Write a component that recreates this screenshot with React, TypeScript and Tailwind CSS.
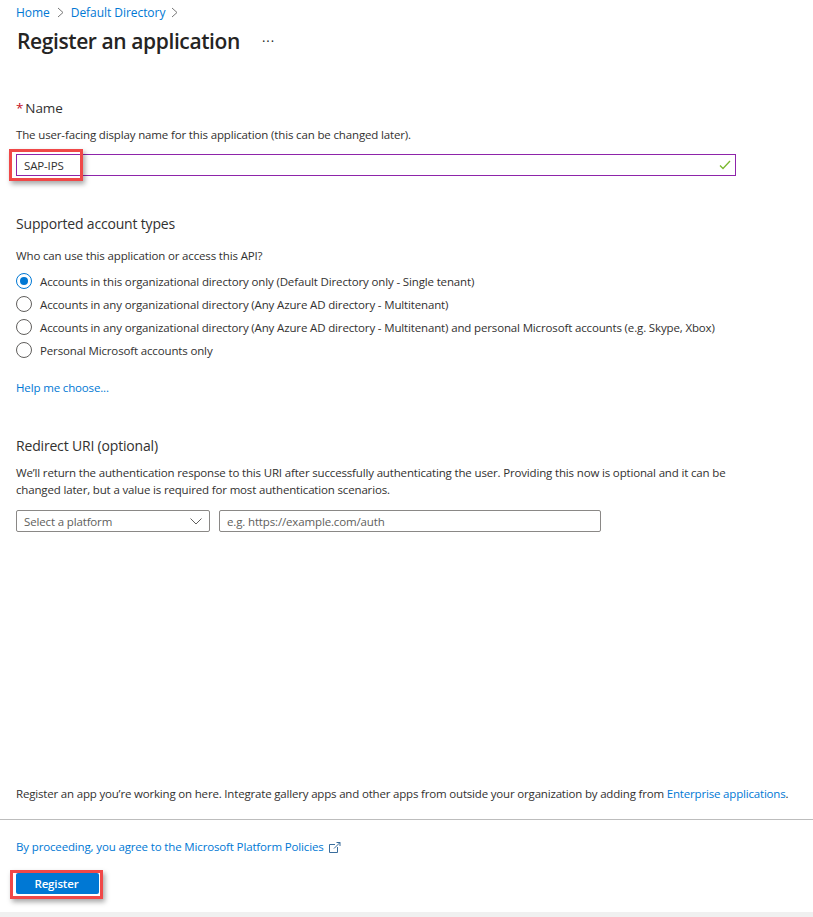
import React from 'react';

const accountTypes = [
  'Accounts in this organizational directory only (Default Directory only - Single tenant)',
  'Accounts in any organizational directory (Any Azure AD directory - Multitenant)',
  'Accounts in any organizational directory (Any Azure AD directory - Multitenant) and personal Microsoft accounts (e.g. Skype, Xbox)',
  'Personal Microsoft accounts only',
];

const Chevron: React.FC = () => (
  <svg width="7" height="11" viewBox="0 0 7 11" fill="none" stroke="#777" strokeWidth="1">
    <path d="M1 1l5 4.5L1 10" />
  </svg>
);

const App: React.FC = () => {
  return (
    <div className="w-[813px] h-[917px] bg-white flex flex-col overflow-hidden text-[11.5px] tracking-[-0.146px] leading-[17px] text-[#323130] font-['Open_Sans','Liberation_Sans',sans-serif]">
      <div className="px-4 pt-[4px] flex items-center h-[21px] text-[12px] tracking-[-0.05px] text-[#0078d4]">
        <span>Home</span>
        <span className="ml-[7px] mr-[7px]"><Chevron /></span>
        <span>Default Directory</span>
        <span className="ml-[6px]"><Chevron /></span>
      </div>
      <div className="pl-[17px] mt-[3px] h-[34px] flex items-center">
        <h1 className="text-[21px] tracking-[-0.4px] leading-[34px] font-semibold text-[#252423]">Register an application</h1>
        <span className="ml-[22px] text-[13px] tracking-[1px] text-[#201f1e]">···</span>
      </div>

      <div className="px-4 mt-[40px]">
        <div className="text-[13.5px] tracking-[-0.1px] leading-[20px]"><span className="text-[#c50f1f] mr-[2px]">*</span>Name</div>
        <p className="mt-[8px] leading-[18px]">The user-facing display name for this application (this can be changed later).</p>
        <div className="relative mt-[10px] w-[720px] h-[22px] border border-[#8e24aa] flex items-center justify-between pl-[7px] pr-[4px]">
          <span>SAP-IPS</span>
          <svg width="12" height="10" viewBox="0 0 12 10" fill="none" stroke="#7ab82e" strokeWidth="1.3">
            <path d="M1 5.5l3 3L11 1" />
          </svg>
          <div className="absolute left-[-8px] top-[-6px] w-[74px] h-[32px] border-[3px] border-[#f04848] shadow-[2px_3px_5px_rgba(0,0,0,0.35)]" />
        </div>

        <h2 className="mt-[38px] text-[14px] tracking-[-0.18px] leading-[20px] font-normal">Supported account types</h2>
        <p className="mt-[13px] leading-[18px]">Who can use this application or access this API?</p>
        <div className="mt-[8px] flex flex-col gap-[7px]">
          {accountTypes.map((label, i) => (
            <label key={label} className="flex items-center h-[16px]">
              <span className={`w-[16px] h-[16px] rounded-full border flex items-center justify-center ${i === 0 ? 'border-[#0078d4]' : 'border-[#605e5c]'}`}>
                {i === 0 && <span className="w-[8px] h-[8px] rounded-full bg-[#0078d4]" />}
              </span>
              <span className="ml-[8px] whitespace-nowrap">{label}</span>
            </label>
          ))}
        </div>
        <a className="block mt-[21px] leading-[18px] text-[#0078d4]">Help me choose...</a>

        <h2 className="mt-[39px] text-[14px] tracking-[-0.18px] leading-[20px] font-normal">Redirect URI (optional)</h2>
        <p className="mt-[8px] w-[740px] tracking-[-0.16px]">
          We’ll return the authentication response to this URI after successfully authenticating the user. Providing this now is optional and it can be changed later, but a value is required for most authentication scenarios.
        </p>
        <div className="mt-[12px] flex gap-[9px]">
          <div className="w-[194px] h-[22px] border border-[#8a8886] rounded-[2px] flex items-center justify-between pl-[7px] pr-[7px] text-[#605e5c]">
            <span>Select a platform</span>
            <svg width="12" height="7" viewBox="0 0 12 7" fill="none" stroke="#605e5c" strokeWidth="1">
              <path d="M0.5 0.5l5.5 5.5 5.5-5.5" />
            </svg>
          </div>
          <div className="w-[382px] h-[22px] border border-[#8a8886] rounded-[2px] flex items-center pl-[7px] text-[#605e5c]">
            e.g. https://example.com/auth
          </div>
        </div>
      </div>

      <div className="flex-1" />

      <p className="px-4 whitespace-nowrap leading-[18px] tracking-[-0.18px]">
        Register an app you’re working on here. Integrate gallery apps and other apps from outside your organization by adding from <span className="text-[#0078d4]">Enterprise applications</span>.
      </p>
      <div className="mt-[16px] h-px bg-[#bdbdbd]" />
      <div className="px-4 mt-[18px] flex items-center text-[#0078d4] leading-[18px]">
        <span>By proceeding, you agree to the Microsoft Platform Policies</span>
        <svg className="ml-[4px]" width="13" height="13" viewBox="0 0 13 13" fill="none" stroke="#3a6d9c" strokeWidth="1">
          <path d="M7 3.5H1.5v8h8V6M6 7.5L12 1.5M8.5 1.5H12V5" />
        </svg>
      </div>
      <div className="px-4 mt-[17px]">
        <div className="relative w-[83px] h-[21px]">
          <button className="w-full h-full bg-[#0078d4] text-white font-semibold rounded-[2px] pr-[2px]">Register</button>
          <div className="absolute left-[-6px] top-[-3px] w-[93px] h-[29px] border-[3px] border-[#f04848] shadow-[2px_3px_5px_rgba(0,0,0,0.35)]" />
        </div>
      </div>
      <div className="mt-[18px] h-[5px] bg-[#f0f0f0]" />
    </div>
  );
};

export default App;
